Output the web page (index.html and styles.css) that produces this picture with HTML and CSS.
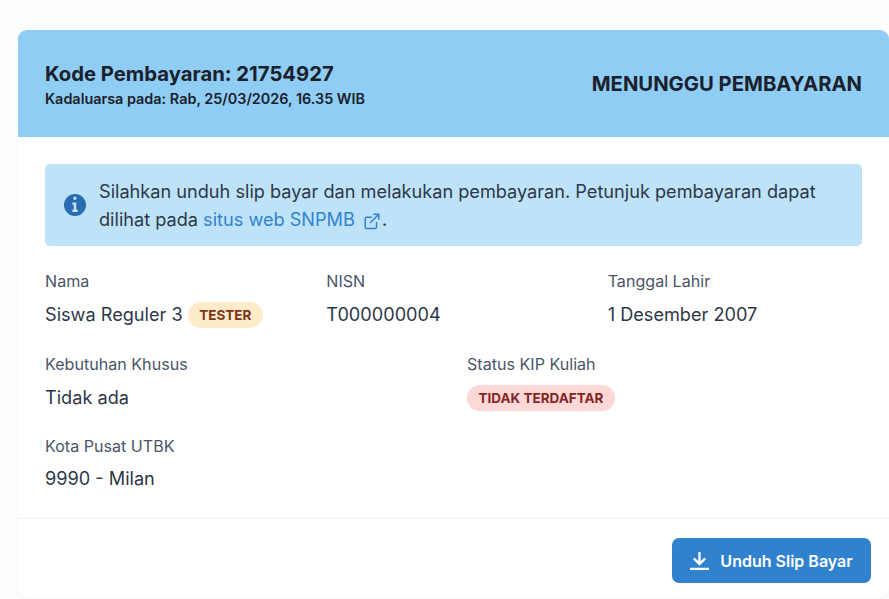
FILE: index.html
```html
<!DOCTYPE html>
<html lang="en">
<head>
    <meta charset="UTF-8">
    <meta name="viewport" content="width=device-width, initial-scale=1.0">
    <title>Slip Pembayaran</title>
    <link rel="stylesheet" href="styles.css">
</head>
<body>
    <div class="card">
        <div class="card-header">
            <div>
                <h2 class="pay-code">Kode Pembayaran: 21754927</h2>
                <p class="pay-expiry">Kadaluarsa pada: Rab, 25/03/2026, 16.35 WIB</p>
            </div>
            <div class="pay-status">MENUNGGU PEMBAYARAN</div>
        </div>

        <div class="card-body">
            <div class="alert">
                <svg class="alert-icon" viewBox="0 0 24 24" aria-hidden="true">
                    <path fill="#2b6cb0" d="M12 1a11 11 0 1 0 0 22 11 11 0 0 0 0-22z"/>
                    <path fill="#bee3f8" d="M13.6 5.2a1.7 1.7 0 1 1-3.4 0 1.7 1.7 0 0 1 3.4 0zM9.4 9.6h3.9v7.2h1.5v2.2H9.3v-2.2h1.4v-5H9.4z"/>
                </svg>
                <p class="alert-text">Silahkan unduh slip bayar dan melakukan pembayaran. Petunjuk pembayaran dapat dilihat pada <a class="alert-link" href="#">situs web SNPMB<svg class="link-icon" viewBox="0 0 24 24" aria-hidden="true"><path d="M18 14v6a2 2 0 0 1-2 2H5a2 2 0 0 1-2-2V9a2 2 0 0 1 2-2h6M14.5 3H21v6.5M10 14 21 3"/></svg></a>.</p>
            </div>

            <div class="info-grid cols-3">
                <div>
                    <div class="info-label">Nama</div>
                    <div class="info-value">Siswa Reguler 3 <span class="badge badge-orange">TESTER</span></div>
                </div>
                <div>
                    <div class="info-label">NISN</div>
                    <div class="info-value">T000000004</div>
                </div>
                <div>
                    <div class="info-label">Tanggal Lahir</div>
                    <div class="info-value">1 Desember 2007</div>
                </div>
            </div>

            <div class="info-grid cols-2">
                <div>
                    <div class="info-label">Kebutuhan Khusus</div>
                    <div class="info-value">Tidak ada</div>
                </div>
                <div>
                    <div class="info-label">Status KIP Kuliah</div>
                    <div class="info-value"><span class="badge badge-red">TIDAK TERDAFTAR</span></div>
                </div>
            </div>

            <div class="info-grid">
                <div>
                    <div class="info-label">Kota Pusat UTBK</div>
                    <div class="info-value">9990 - Milan</div>
                </div>
            </div>
        </div>

        <div class="card-footer">
            <button class="download-btn">
                <svg class="download-icon" viewBox="0 0 20 20" aria-hidden="true">
                    <path d="M10 1v12.5M4 7.8l6 6 6-6M0 18.7h20"/>
                </svg>
                Unduh Slip Bayar
            </button>
        </div>
    </div>
</body>
</html>
```

FILE: styles.css
```css
* {
    box-sizing: border-box;
}
body {
    font-family: Inter, "Liberation Sans", sans-serif;
    margin: 0;
    padding: 30px 0 0 18px;
    height: 599px;
    overflow: hidden;
    background-color: #fcfdfe;
    color: #2d3748;
}
.card {
    background-color: white;
    border-radius: 9px;
    box-shadow: 0 1px 3px rgba(0, 0, 0, 0.05);
    height: 568px;
    width: 871px;
    overflow: hidden;
}
.card-header {
    display: flex;
    justify-content: space-between;
    align-items: center;
    height: 107px;
    padding: 0 27px;
    background-color: #90cdf4;
    color: #1a202c;
}
.pay-code {
    margin: 0 0 3px;
    font-size: 20.25px;
    line-height: 27px;
    font-weight: 700;
}
.pay-expiry {
    margin: 0;
    font-size: 14.4px;
    line-height: 18px;
    font-weight: 600;
}
.pay-status {
    font-size: 20.25px;
    font-weight: 700;
}
.card-body {
    padding: 27px 27px 0;
    height: 381px;
}
.alert {
    display: flex;
    align-items: center;
    height: 82px;
    padding: 0 18px;
    background-color: #bee3f8;
    border-radius: 5px;
}
.alert-icon {
    flex: none;
    width: 24px;
    height: 24px;
    margin-right: 12px;
}
.alert-text {
    margin: 0;
    font-size: 18.15px;
    line-height: 28px;
}
.alert-link {
    color: #3182ce;
    text-decoration: none;
}
.link-icon {
    width: 18px;
    height: 18px;
    margin: 0 1px 0 8px;
    vertical-align: -4px;
    fill: none;
    stroke: #3182ce;
    stroke-width: 2;
    stroke-linecap: round;
    stroke-linejoin: round;
}
.info-grid {
    display: grid;
    column-gap: 27px;
    margin-top: 26.2px;
}
.cols-3 {
    grid-template-columns: repeat(3, 1fr);
    margin-top: 24px;
}
.cols-2 {
    grid-template-columns: repeat(2, 1fr);
    margin-top: 27.5px;
}
.info-label {
    font-size: 16.1px;
    line-height: 23px;
    margin-bottom: 8.5px;
    color: #4a5568;
}
.info-value {
    display: flex;
    align-items: center;
    height: 24px;
    font-size: 18.15px;
    white-space: pre;
}
.badge {
    flex: none;
    padding: 0 11.5px;
    border-radius: 14px;
    font-size: 13.5px;
    font-weight: 700;
    line-height: 26px;
    margin-top: 3px;
}
.badge-orange {
    background-color: #feebc8;
    color: #7b341e;
}
.badge-red {
    background-color: #fed7d7;
    color: #822727;
}
.card-footer {
    display: flex;
    justify-content: flex-end;
    align-items: flex-start;
    height: 80px;
    padding: 19px 18px 0;
    border-top: 1px solid #edf2f7;
}
.download-btn {
    display: flex;
    align-items: center;
    justify-content: center;
    gap: 11px;
    width: 199px;
    height: 45px;
    background-color: #3182ce;
    color: white;
    border: none;
    border-radius: 7px;
    font-family: inherit;
    font-size: 16px;
    font-weight: 600;
    cursor: pointer;
}
.download-icon {
    width: 19px;
    height: 19px;
    fill: none;
    stroke: white;
    stroke-width: 2.4;
}
```
